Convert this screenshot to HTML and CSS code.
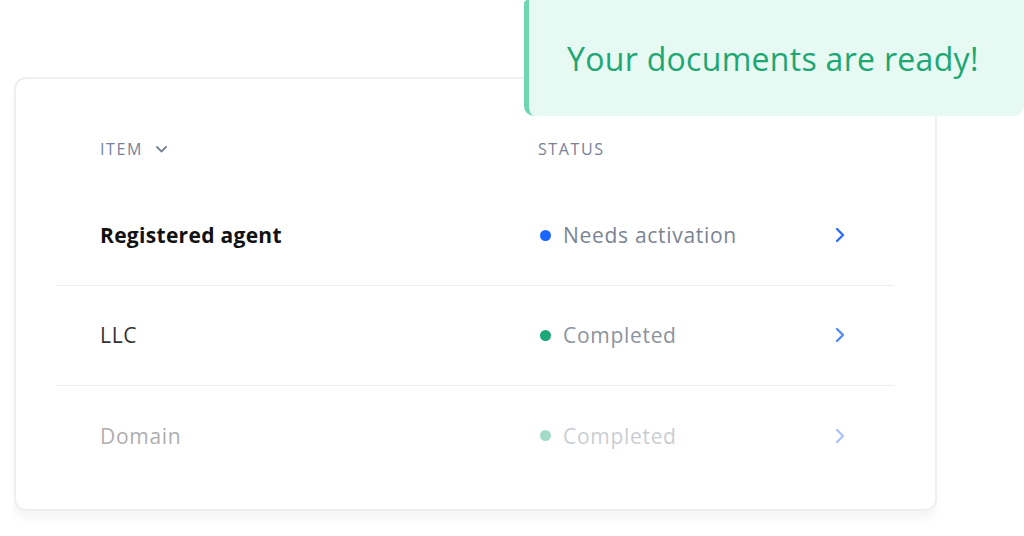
FILE: index.html
```html
<!DOCTYPE html>
<html lang="en">
<head>
    <meta charset="UTF-8">
    <meta name="viewport" content="width=device-width, initial-scale=1.0">
    <title>Documents</title>
    <link rel="stylesheet" href="styles.css">
</head>
<body>
    <div class="page">
        <div class="card">
            <div class="head">
                <div class="col-item">ITEM
                    <svg class="caret" width="11" height="7" viewBox="0 0 11 7"><path d="M1 1l4.5 4.5L10 1" fill="none" stroke="#7a8494" stroke-width="1.8" stroke-linecap="round" stroke-linejoin="round"/></svg>
                </div>
                <div class="col-status">STATUS</div>
                <div></div>
            </div>

            <div class="row active">
                <div class="name">Registered agent</div>
                <div class="status"><span class="dot blue"></span>Needs activation</div>
                <svg class="arrow" width="11" height="16" viewBox="0 0 11 16"><path d="M2 2l6 6-6 6" fill="none" stroke="#2a6ff5" stroke-width="2.4" stroke-linecap="round" stroke-linejoin="round"/></svg>
            </div>

            <div class="row second">
                <div class="name">LLC</div>
                <div class="status"><span class="dot green"></span>Completed</div>
                <svg class="arrow" width="11" height="16" viewBox="0 0 11 16"><path d="M2 2l6 6-6 6" fill="none" stroke="#2a6ff5" stroke-width="2.4" stroke-linecap="round" stroke-linejoin="round"/></svg>
            </div>

            <div class="row faded">
                <div class="name">Domain</div>
                <div class="status"><span class="dot green"></span>Completed</div>
                <svg class="arrow" width="11" height="16" viewBox="0 0 11 16"><path d="M2 2l6 6-6 6" fill="none" stroke="#2a6ff5" stroke-width="2.4" stroke-linecap="round" stroke-linejoin="round"/></svg>
            </div>
        </div>

        <div class="toast">Your documents are ready!</div>
    </div>
</body>
</html>
```

FILE: styles.css
```css
body {
    margin: 0;
    background: #fff;
    font-family: "Open Sans", Lato, sans-serif;
}
.page {
    position: relative;
    width: 1024px;
    height: 536px;
    padding: 77px 0 0 14px;
    box-sizing: border-box;
    overflow: hidden;
}
.card {
    width: 923px;
    height: 434px;
    box-sizing: border-box;
    border: 2px solid #efefef;
    border-radius: 12px;
    box-shadow: 0 8px 6px rgba(0, 0, 0, 0.035);
    padding: 0 41px 0 41px;
}
.head, .row {
    display: grid;
    grid-template-columns: 438px 1fr 11px;
    align-items: center;
    padding: 0 48px 0 43px;
    box-sizing: border-box;
}
.head {
    height: 107px;
    align-items: end;
    padding-bottom: 26px;
    font-size: 16px;
    letter-spacing: 1.6px;
    color: #77819a;
}
.col-item {
    display: flex;
    align-items: center;
    gap: 13px;
}
.caret { margin-top: 1px; }
.row {
    height: 100px;
    padding-bottom: 1px;
    border-bottom: 1px solid #eeeeee;
    font-size: 21px;
    letter-spacing: 0.7px;
}
.row:last-child { border-bottom: none; }
.name { color: #333; }
.active .name {
    color: #111;
    font-weight: 700;
    letter-spacing: 0.3px;
}
.status {
    display: flex;
    align-items: center;
    gap: 12px;
    color: #7a8494;
    padding-left: 2px;
}
.dot {
    width: 11px;
    height: 11px;
    border-radius: 50%;
}
.dot.blue { background: #1a66ff; }
.dot.green { background: #1ca877; }
.second .status { color: #8b93a0; }
.second .arrow { opacity: 0.8; }
.faded { opacity: 0.4; }
.toast {
    position: absolute;
    top: 0;
    left: 524px;
    width: 500px;
    height: 116px;
    box-sizing: border-box;
    background: #e6f9f2;
    border-left: 5px solid #6fd6b0;
    border-radius: 0 0 10px 10px;
    border-top-left-radius: 4px;
    padding-left: 38px;
    display: flex;
    align-items: center;
    color: #1ea774;
    font-size: 32px;
    letter-spacing: 0.3px;
}
```
